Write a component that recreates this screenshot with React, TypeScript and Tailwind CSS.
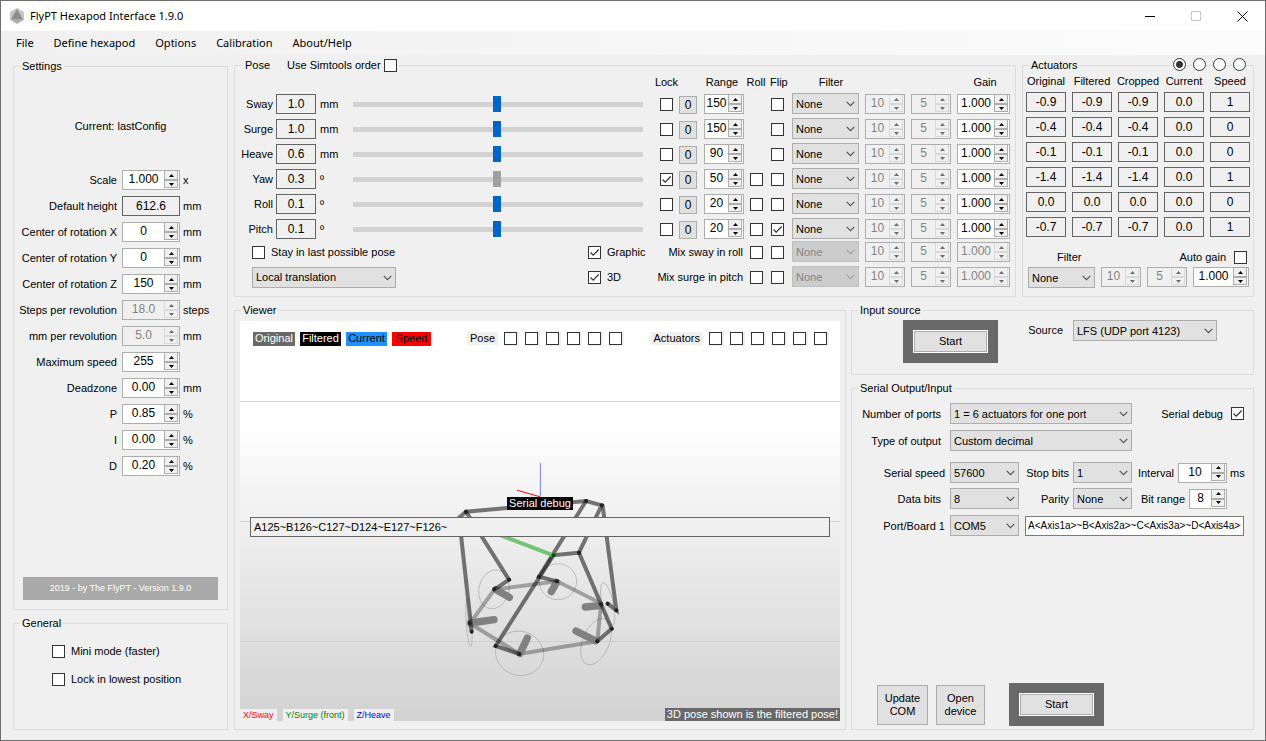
import { useId, useState } from "react";
import type { ReactNode } from "react";
import clsx from "clsx";

const POSE_ROWS = [
  { name: "Sway", value: "1.0", unit: "mm", range: "150", roll: false },
  { name: "Surge", value: "1.0", unit: "mm", range: "150", roll: false },
  { name: "Heave", value: "0.6", unit: "mm", range: "90", roll: false },
  { name: "Yaw", value: "0.3", unit: "º", range: "50", roll: true, locked: true },
  { name: "Roll", value: "0.1", unit: "º", range: "20", roll: true },
  { name: "Pitch", value: "0.1", unit: "º", range: "20", roll: true, flipped: true },
];

const SETTINGS = [
  { label: "Scale", value: "1.000", unit: "x" },
  { label: "Default height", value: "612.6", unit: "mm", readOnly: true },
  { label: "Center of rotation X", value: "0", unit: "mm" },
  { label: "Center of rotation Y", value: "0", unit: "mm" },
  { label: "Center of rotation Z", value: "150", unit: "mm" },
  { label: "Steps per revolution", value: "18.0", unit: "steps", disabled: true },
  { label: "mm per revolution", value: "5.0", unit: "mm", disabled: true },
  { label: "Maximum speed", value: "255", unit: "" },
  { label: "Deadzone", value: "0.00", unit: "mm" },
  { label: "P", value: "0.85", unit: "%" },
  { label: "I", value: "0.00", unit: "%" },
  { label: "D", value: "0.20", unit: "%" },
];

const ACTUATOR_HEADS = ["Original", "Filtered", "Cropped", "Current", "Speed"];

const ACTUATORS = [
  ["-0.9", "-0.9", "-0.9", "0.0", "1"],
  ["-0.4", "-0.4", "-0.4", "0.0", "0"],
  ["-0.1", "-0.1", "-0.1", "0.0", "0"],
  ["-1.4", "-1.4", "-1.4", "0.0", "1"],
  ["0.0", "0.0", "0.0", "0.0", "0"],
  ["-0.7", "-0.7", "-0.7", "0.0", "1"],
];

const SIX = [1, 2, 3, 4, 5, 6];

function Group({ title, className, children }: { title: ReactNode; className?: string; children: ReactNode }) {
  return (
    <fieldset className={clsx("relative min-w-0 border border-[#dcdcdc]", className)}>
      <legend className="ml-[6px] h-[14px] px-[2px] leading-[14px]">{title}</legend>
      {children}
    </fieldset>
  );
}

function Checkbox({ id, label, checked }: { id?: string; label?: string; checked?: boolean }) {
  return (
    <span className="relative inline-flex size-[13px] shrink-0">
      <input
        id={id}
        type="checkbox"
        aria-label={label}
        defaultChecked={checked}
        className="peer size-[13px] appearance-none border border-[#333333] bg-white"
      />
      <svg viewBox="0 0 13 13" className="pointer-events-none absolute inset-0 hidden peer-checked:block" fill="none">
        <path d="M2.5 6.5 5.2 9.2 10.7 3.5" stroke="#333333" strokeWidth="1.2" />
      </svg>
    </span>
  );
}

function CheckField({ text, checked, className }: { text: string; checked?: boolean; className?: string }) {
  const id = useId();
  return (
    <span className={clsx("flex items-center gap-[6px]", className)}>
      <Checkbox id={id} checked={checked} />
      <label htmlFor={id} className="whitespace-nowrap">{text}</label>
    </span>
  );
}

function Spinner({
  id,
  label,
  value,
  disabled,
  className,
}: {
  id?: string;
  label?: string;
  value: string;
  disabled?: boolean;
  className?: string;
}) {
  const [current, setCurrent] = useState(value);
  const decimals = (value.split(".")[1] ?? "").length;

  const step = (direction: number) => {
    const next = Number(current) + direction / 10 ** decimals;
    setCurrent(next.toFixed(decimals));
  };

  const button = clsx(
    "flex w-full items-center justify-center border",
    disabled ? "border-[#d9d9d9] bg-[#f0f0f0] text-[#6d6d6d]" : "border-[#adadad] bg-[#f0f0f0] text-black",
  );

  return (
    <span
      className={clsx(
        "flex h-5 shrink-0 border border-[#adadad] pr-px",
        disabled ? "bg-[#f0f0f0] text-[#838383]" : "bg-white text-black",
        className,
      )}
    >
      <input
        id={id}
        type="text"
        inputMode="decimal"
        aria-label={label}
        value={current}
        disabled={disabled}
        onChange={(event) => setCurrent(event.target.value)}
        className="h-4 min-w-0 flex-1 bg-transparent text-center text-[12px] leading-4 outline-none"
      />
      <span className="flex w-[14px] shrink-0 flex-col pb-px">
        <button type="button" aria-label="Increase" disabled={disabled} onClick={() => step(1)} className={clsx(button, "h-[9px] border-t-0")}>
          <svg width="5" height="3" viewBox="0 0 5 3"><path d="M0 3h5L2.5 0z" fill="currentColor" /></svg>
        </button>
        <button type="button" aria-label="Decrease" disabled={disabled} onClick={() => step(-1)} className={clsx(button, "h-2")}>
          <svg width="5" height="3" viewBox="0 0 5 3"><path d="M0 0h5L2.5 3z" fill="currentColor" /></svg>
        </button>
      </span>
    </span>
  );
}

function Select({
  id,
  label,
  options,
  disabled,
  className,
}: {
  id?: string;
  label?: string;
  options: string[];
  disabled?: boolean;
  className?: string;
}) {
  return (
    <span className={clsx("relative inline-flex h-[21px] shrink-0", className)}>
      <select
        id={id}
        aria-label={label}
        disabled={disabled}
        className="w-full appearance-none border border-[#adadad] bg-[#e1e1e1] pr-4 pl-[3px] text-black disabled:border-[#bfbfbf] disabled:bg-[#cccccc] disabled:text-[#838383] disabled:opacity-100"
      >
        {options.map((option) => (
          <option key={option}>{option}</option>
        ))}
      </select>
      <svg
        viewBox="0 0 9 6"
        fill="none"
        className={clsx("pointer-events-none absolute top-2 right-1 h-[6px] w-[9px]", disabled ? "text-[#a0a0a0]" : "text-[#555555]")}
      >
        <path d="M.7 .9 4.5 4.7 8.3 .9" stroke="currentColor" strokeWidth="1.2" />
      </svg>
    </span>
  );
}

function ValueBox({ children, className }: { children: ReactNode; className?: string }) {
  return (
    <output className={clsx("block h-5 shrink-0 border border-[#646464] text-center text-[12px] leading-[19px]", className)}>
      {children}
    </output>
  );
}

function TitleBar() {
  return (
    <header className="flex h-[30px] items-center bg-white font-['Noto_Sans','Open_Sans',sans-serif] text-[11px] text-black">
      <svg width="16" height="16" viewBox="0 0 16 16" className="ml-2">
        <path d="M8 0 15 4v8l-7 4-7-4V4z" fill="#c4c4c4" />
        <path d="M8 1 14 11.5H2z" fill="#8c8c8c" />
        <path d="M2 11.5h12L8 15.4z" fill="#adadad" />
      </svg>
      <h1 className="ml-[5px] flex-1">FlyPT Hexapod Interface 1.9.0</h1>
      <button type="button" aria-label="Minimize" className="flex h-full w-[46px] items-center justify-center">
        <svg width="11" height="11" viewBox="0 0 11 11"><path d="M0 5.5h10" stroke="#000" /></svg>
      </button>
      <button type="button" aria-label="Maximize" className="flex h-full w-[46px] items-center justify-center" disabled>
        <svg width="11" height="11" viewBox="0 0 11 11"><path d="M.5.5h9v9h-9z" stroke="#c4c4c4" fill="none" /></svg>
      </button>
      <button type="button" aria-label="Close" className="flex h-full w-[46px] items-center justify-center">
        <svg width="11" height="11" viewBox="0 0 11 11"><path d="M.5.5l10 10M10.5.5l-10 10" stroke="#000" fill="none" /></svg>
      </button>
    </header>
  );
}

function MenuBar() {
  return (
    <nav className="flex h-6 items-center gap-5 bg-gradient-to-r from-[#f0f0f0] to-[#fcfcfc] pl-[15px] font-['Noto_Sans','Open_Sans',sans-serif] text-[11px] text-black">
      {["File", "Define hexapod", "Options", "Calibration", "About/Help"].map((item) => (
        <button key={item} type="button">{item}</button>
      ))}
    </nav>
  );
}

function SettingRow({ row }: { row: (typeof SETTINGS)[number] }) {
  const id = useId();
  return (
    <div className="flex h-5 items-center">
      <label htmlFor={id} className="w-[103px] text-right whitespace-nowrap">{row.label}</label>
      {row.readOnly ? (
        <ValueBox className="ml-[5px] w-[58px]">{row.value}</ValueBox>
      ) : (
        <Spinner id={id} value={row.value} disabled={row.disabled} className="ml-[5px] w-[58px]" />
      )}
      <span className="ml-[3px]">{row.unit}</span>
    </div>
  );
}

function FilterControls({ name, disabled }: { name: string; disabled?: boolean }) {
  return (
    <>
      <Select label={`${name} filter`} options={["None"]} disabled={disabled} className="ml-2 w-[67px] self-end" />
      <Spinner label={`${name} filter value 1`} value="10" disabled className="ml-[6px] w-10" />
      <Spinner label={`${name} filter value 2`} value="5" disabled className="ml-[6px] w-10" />
      <Spinner label={`${name} gain`} value="1.000" disabled={disabled} className="mr-[5px] ml-[6px] w-[53px]" />
    </>
  );
}

function PoseRow({ row }: { row: (typeof POSE_ROWS)[number] }) {
  return (
    <div className="flex h-5 items-center">
      <span className="w-[38px] text-right">{row.name}</span>
      <ValueBox className="ml-[3px] w-10">{row.value}</ValueBox>
      <span className="ml-1 w-[33px]">{row.unit}</span>
      <input
        type="range"
        aria-label={row.name}
        min={0}
        max={1000}
        defaultValue={496}
        disabled={row.locked}
        className="h-4 min-w-0 flex-1 appearance-none bg-transparent [&::-webkit-slider-runnable-track]:h-[5px] [&::-webkit-slider-runnable-track]:bg-[#d2d2d2] [&::-webkit-slider-thumb]:-mt-[6px] [&::-webkit-slider-thumb]:h-4 [&::-webkit-slider-thumb]:w-2 [&::-webkit-slider-thumb]:appearance-none [&::-webkit-slider-thumb]:bg-[#0066cc] disabled:[&::-webkit-slider-thumb]:bg-[#a0a0a0]"
      />
      <span className="ml-[17px] flex">
        <Checkbox label={`Lock ${row.name}`} checked={row.locked} />
      </span>
      <button type="button" className="ml-[6px] h-[18px] w-[18px] self-end border border-[#adadad] bg-[#e1e1e1] text-[12px] leading-4">0</button>
      <Spinner label={`${row.name} range`} value={row.range} className="ml-[7px] w-10" />
      <span className="ml-[6px] flex w-[13px]">
        {row.roll && <Checkbox label={`${row.name} roll`} />}
      </span>
      <span className="ml-2 flex">
        <Checkbox label={`Flip ${row.name}`} checked={row.flipped} />
      </span>
      <FilterControls name={row.name} />
    </div>
  );
}

function MixRow({ left, toggle, mix }: { left: ReactNode; toggle: string; mix: string }) {
  return (
    <div className="flex h-5 items-center">
      <div className="ml-[17px] flex-1">{left}</div>
      <CheckField text={toggle} checked className="w-[60px]" />
      <span className="w-[95px] text-right whitespace-nowrap">{mix}</span>
      <span className="ml-[7px] flex">
        <Checkbox label={`${mix} roll`} />
      </span>
      <span className="ml-2 flex">
        <Checkbox label={`${mix} flip`} />
      </span>
      <FilterControls name={mix} disabled />
    </div>
  );
}

function PosePanel() {
  const orderId = useId();
  return (
    <Group
      className="flex-1 pb-[9px]"
      title={
        <span className="flex items-center pl-[2px]">
          Pose
          <label htmlFor={orderId} className="ml-[17px]">Use Simtools order</label>
          <span className="ml-[3px] flex">
            <Checkbox id={orderId} />
          </span>
        </span>
      }
    >
      <div className="mt-[3px] mb-[5px] flex h-[14px] justify-end text-center leading-[14px]">
        <span className="w-[37px]">Lock</span>
        <span className="ml-[17px] w-10">Range</span>
        <span className="w-7">Roll</span>
        <span className="w-4">Flip</span>
        <span className="ml-[6px] w-[78px]">Filter</span>
        <span className="mr-[2px] ml-[87px] w-14">Gain</span>
      </div>
      <div className="flex flex-col gap-[5px]">
        {POSE_ROWS.map((row) => (
          <PoseRow key={row.name} row={row} />
        ))}
      </div>
      <div className="mt-[3px] flex flex-col gap-[5px]">
        <MixRow left={<CheckField text="Stay in last possible pose" />} toggle="Graphic" mix="Mix sway in roll" />
        <MixRow
          left={<Select label="Translation" options={["Local translation"]} className="w-36 align-top" />}
          toggle="3D"
          mix="Mix surge in pitch"
        />
      </div>
    </Group>
  );
}

function ActuatorPanel() {
  const autoId = useId();
  return (
    <Group title="Actuators" className="w-[232px]">
      <div className="absolute -top-[14px] right-[6px] flex gap-[5px]">
        {[0, 1, 2, 3].map((n) => (
          <span key={n} className="flex bg-[#f0f0f0] px-px">
            <input
              type="radio"
              name="board"
              aria-label={`Board ${n + 1}`}
              defaultChecked={n === 0}
              className="size-[13px] appearance-none rounded-full border border-[#333333] bg-white checked:bg-[radial-gradient(#333333_3px,white_4px)]"
            />
          </span>
        ))}
      </div>
      <table className="mt-[2px] w-full table-fixed">
        <thead>
          <tr>
            {ACTUATOR_HEADS.map((head) => (
              <th key={head} className="h-[18px] p-0 pb-1 text-center leading-[14px] font-normal">{head}</th>
            ))}
          </tr>
        </thead>
        <tbody>
          {ACTUATORS.map((cells, row) => (
            <tr key={row}>
              {cells.map((cell, col) => (
                <td key={col} className="px-[3px] pt-0 pb-[5px]">
                  <ValueBox>{cell}</ValueBox>
                </td>
              ))}
            </tr>
          ))}
        </tbody>
      </table>
      <div className="mt-2 flex h-[14px] items-center">
        <span className="ml-[34px] flex-1">Filter</span>
        <label htmlFor={autoId}>Auto gain</label>
        <span className="mr-[6px] ml-2 flex">
          <Checkbox id={autoId} />
        </span>
      </div>
      <div className="mt-[3px] flex items-start pl-[5px]">
        <Select label="Actuator filter" options={["None"]} className="w-[67px]" />
        <Spinner label="Actuator filter value 1" value="10" disabled className="ml-[6px] w-10" />
        <Spinner label="Actuator filter value 2" value="5" disabled className="ml-[6px] w-10" />
        <Spinner label="Actuator gain" value="1.000" className="ml-[6px] w-14" />
      </div>
    </Group>
  );
}

function Hexapod() {
  return (
    <svg viewBox="0 0 600 400" className="absolute inset-0 h-full w-full" fill="none">
      <g transform="translate(200 119) scale(.33333)" strokeLinecap="round">
        <g stroke="#b4b4b4" strokeWidth="2.5">
          <ellipse cx="162" cy="448" rx="45" ry="59" transform="rotate(14 162 448)" />
          <ellipse cx="354" cy="425" rx="56" ry="54" />
          <ellipse cx="503" cy="492" rx="17" ry="65" transform="rotate(-12 503 492)" />
          <ellipse cx="468" cy="605" rx="40" ry="73" transform="rotate(22 468 605)" />
          <ellipse cx="239" cy="640" rx="73" ry="66" transform="rotate(18 239 640)" />
          <ellipse cx="87" cy="549" rx="8" ry="71" transform="rotate(-4 87 549)" />
        </g>
        <path d="M163 449 351 424 483 490 472 604 238 642 90 550Z" stroke="#000" strokeOpacity=".3" strokeWidth="12" />
        <g stroke="#818181" strokeWidth="22">
          <path d="M168 449 208 472M350 427 334 455M479 497 436 501M466 602 408 573M240 640 262 594M92 549 162 539" />
        </g>
        <g stroke="#202020" strokeOpacity=".6" strokeWidth="12">
          <path d="M340 346 417 338 485 196 438 183 78 215 55 235" />
          <path d="M58 240 95 575 90 549" />
          <path d="M78 215 207 419 163 449" />
          <path d="M438 183 297 410 351 424" />
          <path d="M340 346 167 618 238 642" />
          <path d="M417 338 515 566 472 604" />
          <path d="M488 198 529 511 503 491" />
        </g>
        <path d="M160 278 340 346" stroke="#74c474" strokeWidth="12" />
        <g fill="#222222">
          {[[78, 215], [438, 183], [485, 196], [417, 338], [207, 419], [297, 410], [351, 424], [163, 447], [90, 549], [95, 575], [167, 618], [238, 642], [472, 604], [515, 566], [529, 511], [503, 491], [483, 493]].map(
            ([x, y]) => (
              <circle key={`${x}-${y}`} cx={x} cy={y} r="6" />
            ),
          )}
        </g>
        <circle cx="340" cy="346" r="6" fill="#004d00" />
        <path d="M301 70V168" stroke="#7a7aff" strokeWidth="3" />
        <path d="M232 151 299 170" stroke="#ff0000" strokeWidth="3" />
      </g>
    </svg>
  );
}

function CheckStrip({ text, className }: { text: string; className?: string }) {
  return (
    <div className={clsx("flex items-start", className)}>
      <span className="mr-[6px] bg-[#f0f0f0] px-[3px]">{text}</span>
      <span className="flex gap-[6px]">
        {SIX.map((n) => (
          <span key={n} className="flex bg-[#f0f0f0] pr-[2px] pb-px">
            <Checkbox label={`${text} ${n}`} />
          </span>
        ))}
      </span>
    </div>
  );
}

function Viewer() {
  return (
    <Group title="Viewer" className="flex flex-1 flex-col pb-2">
      <div className="relative mx-[5px] mt-1 min-h-[400px] flex-1 bg-[linear-gradient(#ffffff_25%,#f0f0f0_50%,#d2d2d2)]">
        <div className="absolute inset-x-0 top-[20%] h-px bg-[#d2d2d2]" />
        <div className="absolute inset-x-0 top-1/2 h-px bg-[#d2d2d2]" />
        <div className="absolute inset-x-0 top-[80%] h-px bg-[#d0d0d0]" />
        <Hexapod />

        <div className="absolute inset-x-[13px] top-[11px] flex leading-[13px]">
          <span className="w-[42px] bg-[#696969] text-center text-white">Original</span>
          <span className="ml-[5px] w-[41px] bg-black text-center text-white">Filtered</span>
          <span className="ml-[5px] w-[41px] bg-[#1e90ff] text-center">Current</span>
          <span className="ml-[5px] w-[39px] bg-[#ff0000] text-center">Speed</span>
          <CheckStrip text="Pose" className="ml-9" />
          <CheckStrip text="Actuators" className="mr-[-2px] ml-auto" />
        </div>

        <label htmlFor="debug" className="absolute top-[44%] left-1/2 h-[13px] w-[66px] -translate-x-1/2 bg-black text-center leading-[13px] whitespace-nowrap text-white">
          Serial debug
        </label>
        <input
          id="debug"
          type="text"
          readOnly
          value="A125~B126~C127~D124~E127~F126~"
          className="absolute inset-x-[10px] top-[49%] h-5 border border-[#646464] bg-[#f0f0f0] px-[3px]"
        />

        <div className="absolute inset-x-0 bottom-0 flex items-end gap-[6px] text-[9px] leading-3">
          <span className="bg-[#f0f0f0] px-[3px] text-[#ff0000]">X/Sway</span>
          <span className="bg-[#f0f0f0] px-[3px] text-[#008000]">Y/Surge (front)</span>
          <span className="bg-[#f0f0f0] px-[3px] text-[#0000ff]">Z/Heave</span>
          <span className="ml-auto bg-[#696969] px-[2px] text-[11px] leading-[13px] text-white">
            3D pose shown is the filtered pose!
          </span>
        </div>
      </div>
    </Group>
  );
}

function StartButton({ label }: { label: string }) {
  return (
    <div className="bg-[#696969] p-[10px]">
      <button type="button" aria-label={label} className="block h-[23px] w-[75px] border border-white bg-[#adadad] p-px">
        <span className="block h-full bg-[#e1e1e1] leading-[19px]">Start</span>
      </button>
    </div>
  );
}

function InputSource() {
  return (
    <Group title="Input source" className="h-[72px]">
      <div className="mt-[3px] flex items-start pl-[51px]">
        <StartButton label="Start input" />
        <label htmlFor="source" className="ml-auto leading-[21px]">Source</label>
        <Select id="source" options={["LFS (UDP port 4123)"]} className="mr-9 ml-[10px] w-36" />
      </div>
    </Group>
  );
}

function SerialPanel() {
  const label = "w-[93px] text-right whitespace-nowrap";
  return (
    <Group title="Serial Output/Input" className="flex flex-1 flex-col">
      <div className="mt-2 flex items-center pr-[9px]">
        <label htmlFor="ports" className={clsx(label, "pr-1")}>Number of ports</label>
        <Select id="ports" options={["1 = 6 actuators for one port"]} className="ml-[5px] w-[182px]" />
        <label htmlFor="serial-debug" className="mr-2 ml-auto">Serial debug</label>
        <Checkbox id="serial-debug" checked />
      </div>
      <div className="mt-[6px] flex items-center">
        <label htmlFor="output" className={clsx(label, "pr-1")}>Type of output</label>
        <Select id="output" options={["Custom decimal"]} className="ml-[5px] w-[182px]" />
      </div>
      <div className="mt-[11px] flex items-center">
        <label htmlFor="baud" className={label}>Serial speed</label>
        <Select id="baud" options={["57600"]} className="ml-[5px] w-[69px]" />
        <label htmlFor="stop" className="ml-auto">Stop bits</label>
        <Select id="stop" options={["1"]} className="ml-1 w-[59px]" />
        <label htmlFor="interval" className="w-[42px] text-right">Interval</label>
        <Spinner id="interval" value="10" className="ml-1 w-[49px]" />
        <span className="ml-[3px] w-[23px]">ms</span>
      </div>
      <div className="mt-[5px] flex items-center">
        <label htmlFor="bits" className={clsx(label, "pr-1")}>Data bits</label>
        <Select id="bits" options={["8"]} className="ml-[5px] w-[69px]" />
        <label htmlFor="parity" className="ml-auto">Parity</label>
        <Select id="parity" options={["None"]} className="ml-1 w-[59px]" />
        <label htmlFor="bit-range" className="w-[53px] text-right whitespace-nowrap">Bit range</label>
        <Spinner id="bit-range" value="8" className="mr-[26px] ml-1 w-[38px]" />
      </div>
      <div className="mt-[6px] flex items-center pr-[9px]">
        <label htmlFor="port" className={label}>Port/Board 1</label>
        <Select id="port" options={["COM5"]} className="ml-[5px] w-[69px]" />
        <input
          type="text"
          aria-label="Port output format"
          defaultValue="A<Axis1a>~B<Axis2a>~C<Axis3a>~D<Axis4a>~E<Axis5a>~F<Axis6a>~"
          className="ml-[6px] h-5 min-w-0 flex-1 border border-[#7a7a7a] bg-white px-[2px] text-[10px]"
        />
      </div>
      <div className="mt-auto mb-[3px] flex items-center pl-[25px]">
        <button type="button" className="h-10 w-[51px] border border-[#adadad] bg-[#e1e1e1] leading-[13px]">Update COM</button>
        <button type="button" className="mr-6 ml-2 h-10 w-[49px] border border-[#adadad] bg-[#e1e1e1] leading-[13px]">Open device</button>
        <StartButton label="Start serial" />
      </div>
    </Group>
  );
}

export default function App() {
  return (
    <div className="flex min-h-screen flex-col border border-[#6e6e6e] bg-[#f0f0f0] font-['Liberation_Sans',Arial,sans-serif] text-[11px] leading-[14px] text-black">
      <TitleBar />
      <MenuBar />
      <main className="flex flex-1 gap-[6px] pt-[3px] pr-[11px] pb-[10px] pl-3">
        <div className="flex w-[215px] shrink-0 flex-col gap-[6px] pt-px">
          <Group title="Settings" className="flex flex-1 flex-col">
            <p className="mt-[46px] text-center">Current: lastConfig</p>
            <div className="mt-[37px] flex flex-col gap-[6px]">
              {SETTINGS.map((row) => (
                <SettingRow key={row.label} row={row} />
              ))}
            </div>
            <p className="mx-[9px] mt-auto mb-[9px] h-[23px] bg-[#a9a9a9] text-center text-[9px] leading-[23px] text-white">
              2019 - by The FlyPT - Version 1.9.0
            </p>
          </Group>
          <Group title="General" className="h-[114px]">
            <CheckField text="Mini mode (faster)" className="mt-[14px] ml-[38px]" />
            <CheckField text="Lock in lowest position" className="mt-[14px] ml-[38px]" />
          </Group>
        </div>
        <div className="flex min-w-0 flex-1 flex-col gap-[6px]">
          <div className="flex gap-[6px]">
            <PosePanel />
            <ActuatorPanel />
          </div>
          <div className="flex flex-1 gap-[5px]">
            <Viewer />
            <div className="flex w-[403px] shrink-0 flex-col gap-[6px]">
              <InputSource />
              <SerialPanel />
            </div>
          </div>
        </div>
      </main>
    </div>
  );
}
